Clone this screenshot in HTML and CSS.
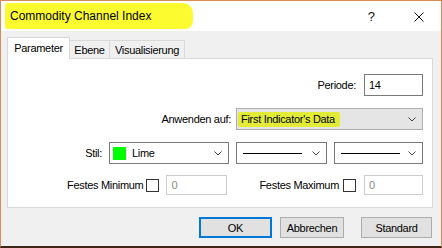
FILE: index.html
```html
<!DOCTYPE html>
<html lang="de">
<head>
  <meta charset="UTF-8" />
  <title>Commodity Channel Index</title>
  <link rel="stylesheet" href="styles.css">
</head>
<body>

  <div class="window">

    <!-- Titelleiste -->
    <div class="titlebar">
      <span class="title">Commodity Channel Index</span>
      <span class="help">?</span>
      <span class="close">
        <svg width="10" height="10" viewBox="0 0 10 10"><path d="M0.5 0.5 L9.5 9.5 M9.5 0.5 L0.5 9.5" stroke="#111" stroke-width="1" fill="none"/></svg>
      </span>
    </div>

    <div class="body">

      <!-- Reiter -->
      <div class="tabs">
        <div class="tab active">Parameter</div>
        <div class="tab tab-layer">Ebene</div>
        <div class="tab tab-visual">Visualisierung</div>
      </div>

      <!-- Parameter -->
      <div class="panel">
        <div class="row">
          <span class="label">Periode:</span>
          <div class="input input-periode">14</div>
        </div>

        <div class="row row-apply">
          <span class="label">Anwenden auf:</span>
          <div class="select select-apply">
            <span class="marked">First Indicator's Data</span>
            <svg class="chevron" width="8" height="5" viewBox="0 0 8 5"><path d="M0.5 0.5 L4 4 L7.5 0.5" stroke="#444" fill="none"/></svg>
          </div>
        </div>

        <div class="row row-style">
          <span class="label">Stil:</span>
          <div class="select select-color">
            <span class="swatch"></span>
            <span>Lime</span>
            <svg class="chevron" width="8" height="5" viewBox="0 0 8 5"><path d="M0.5 0.5 L4 4 L7.5 0.5" stroke="#444" fill="none"/></svg>
          </div>
          <div class="select select-line">
            <span class="line"></span>
            <svg class="chevron" width="8" height="5" viewBox="0 0 8 5"><path d="M0.5 0.5 L4 4 L7.5 0.5" stroke="#444" fill="none"/></svg>
          </div>
          <div class="select select-width">
            <span class="line"></span>
            <svg class="chevron" width="8" height="5" viewBox="0 0 8 5"><path d="M0.5 0.5 L4 4 L7.5 0.5" stroke="#444" fill="none"/></svg>
          </div>
        </div>

        <div class="row row-fixed">
          <span class="label">Festes Minimum</span>
          <span class="checkbox"></span>
          <div class="input disabled input-min">0</div>
          <span class="label label-max">Festes Maximum</span>
          <span class="checkbox"></span>
          <div class="input disabled input-max">0</div>
        </div>
      </div>

      <!-- Knöpfe -->
      <div class="buttons">
        <button class="btn btn-default">OK</button>
        <button class="btn btn-cancel">Abbrechen</button>
        <button class="btn btn-standard">Standard</button>
      </div>

    </div>
  </div>

</body>
</html>
```

FILE: styles.css
```css
/* === BASE === */
* { margin: 0; padding: 0; box-sizing: border-box; }

body {
  font-family: "Liberation Sans", Arial, sans-serif;
  font-size: 11px;
  letter-spacing: -0.3px;
  color: #000;
  background: #fff;
}

/* === FENSTER === */
.window {
  width: 442px;
  height: 248px;
  border: 1px solid #d98b55;
  border-bottom: 2px solid #3d2616;
  display: flex;
  flex-direction: column;
}

.titlebar {
  height: 30px;
  background: #fff;
  display: flex;
  align-items: center;
  letter-spacing: 0;
}

.title {
  font-size: 12px;
  margin-left: 4px;
  padding: 6px 42px 6px 5px;
  background: #fbfb30;
  border-radius: 3px 10px 8px 3px;
}

.help {
  margin-left: auto;
  font-size: 13px;
  color: #111;
}

.close {
  display: flex;
  margin: 2px 17px 0 39px;
}

.body {
  flex: 1;
  background: #f0f0f0;
  padding: 6px 8px 0 6px;
}

/* === REITER === */
.tabs {
  display: flex;
  align-items: flex-end;
  height: 21px;
}

.tab {
  height: 18px;
  border: 1px solid #d9d9d9;
  border-bottom: none;
  border-left: none;
  background: #f0f0f0;
  display: flex;
  align-items: center;
  justify-content: center;
}

.tab-layer { width: 40px; }
.tab-visual { width: 75px; }

.tab.active {
  width: 63px;
  height: 22px;
  margin-bottom: -1px;
  background: #fff;
  border-left: 1px solid #d9d9d9;
  padding-bottom: 2px;
}

/* === PANEL === */
.panel {
  height: 150px;
  background: #fff;
  border: 1px solid #d9d9d9;
  padding: 15px 9px 0 0;
}

.row {
  display: flex;
  justify-content: flex-end;
  align-items: center;
  height: 22px;
  margin-bottom: 12px;
}

.row-style { margin-bottom: 11px; }
.row-fixed { height: 20px; }

.label { margin-right: 8px; }
.row-apply .label { margin-right: 5px; }
.row-style .label { margin-right: 7px; }

.input {
  height: 22px;
  border: 1px solid #7a7a7a;
  background: #fff;
  padding: 2px 4px;
  line-height: 16px;
}

.input-periode { width: 59px; }

.input.disabled {
  height: 20px;
  border-color: #cccccc;
  color: #8a8a8a;
  line-height: 14px;
}

.input-min { width: 61px; margin-left: 7px; }
.input-max { width: 59px; margin-left: 8px; }

.row-fixed .label { margin-right: 3px; }
.row-fixed .label-max { margin-left: 32px; margin-right: 4px; }

.checkbox {
  width: 13px;
  height: 13px;
  border: 1px solid #333;
  background: #fff;
}

/* === AUSWAHLLISTEN === */
.select {
  height: 22px;
  border: 1px solid #7a7a7a;
  background: #fff;
  display: flex;
  align-items: center;
  padding: 0 6px 0 3px;
  gap: 6px;
}

.select .chevron { margin-left: auto; }

.select-apply {
  width: 187px;
  background: #e5e5e5;
  border-color: #adadad;
  padding-left: 1px;
}

.marked {
  background: #e2ec36;
  padding: 1px 5px 2px 3px;
  border-radius: 2px;
}

.select-color { width: 120px; margin-right: 7px; }
.select-line { width: 91px; margin-right: 7px; padding-left: 6px; }
.select-width { width: 89px; padding-left: 6px; }

.swatch {
  width: 13px;
  height: 13px;
  background: #00ff00;
}

.line {
  width: 59px;
  height: 1px;
  background: #000;
}

/* === KNÖPFE === */
.buttons {
  display: flex;
  justify-content: flex-end;
  padding-top: 9px;
  margin-right: 1px;
}

.btn {
  height: 21px;
  font-family: inherit;
  font-size: 11px;
  letter-spacing: -0.3px;
  background: #e1e1e1;
  border: 1px solid #adadad;
}

.btn-default {
  width: 73px;
  border-color: #0078d7;
  box-shadow: inset 0 0 0 1px #0078d7;
  margin-right: 8px;
}

.btn-cancel { width: 64px; margin-right: 17px; }
.btn-standard { width: 71px; }
```
